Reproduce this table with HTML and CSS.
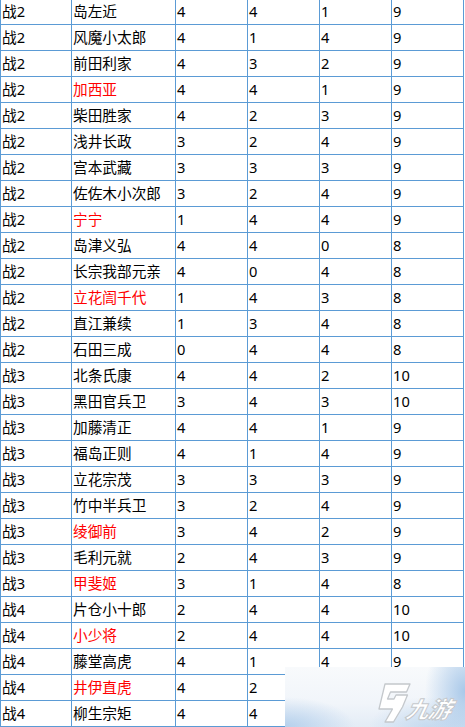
FILE: index.html
```html
<!DOCTYPE html>
<html lang="zh-CN">
<head>
<meta charset="utf-8">
<title>武将表</title>
<link rel="stylesheet" href="styles.css">
</head>
<body>
<div class="sheet">
  <div class="row"><div>战2</div><div>岛左近</div><div>4</div><div>4</div><div>1</div><div>9</div></div>
  <div class="row"><div>战2</div><div>风魔小太郎</div><div>4</div><div>1</div><div>4</div><div>9</div></div>
  <div class="row"><div>战2</div><div>前田利家</div><div>4</div><div>3</div><div>2</div><div>9</div></div>
  <div class="row"><div>战2</div><div class="red">加西亚</div><div>4</div><div>4</div><div>1</div><div>9</div></div>
  <div class="row"><div>战2</div><div>柴田胜家</div><div>4</div><div>2</div><div>3</div><div>9</div></div>
  <div class="row"><div>战2</div><div>浅井长政</div><div>3</div><div>2</div><div>4</div><div>9</div></div>
  <div class="row"><div>战2</div><div>宫本武藏</div><div>3</div><div>3</div><div>3</div><div>9</div></div>
  <div class="row"><div>战2</div><div>佐佐木小次郎</div><div>3</div><div>2</div><div>4</div><div>9</div></div>
  <div class="row"><div>战2</div><div class="red">宁宁</div><div>1</div><div>4</div><div>4</div><div>9</div></div>
  <div class="row"><div>战2</div><div>岛津义弘</div><div>4</div><div>4</div><div>0</div><div>8</div></div>
  <div class="row"><div>战2</div><div>长宗我部元亲</div><div>4</div><div>0</div><div>4</div><div>8</div></div>
  <div class="row"><div>战2</div><div class="red">立花訚千代</div><div>1</div><div>4</div><div>3</div><div>8</div></div>
  <div class="row"><div>战2</div><div>直江兼续</div><div>1</div><div>3</div><div>4</div><div>8</div></div>
  <div class="row"><div>战2</div><div>石田三成</div><div>0</div><div>4</div><div>4</div><div>8</div></div>
  <div class="row"><div>战3</div><div>北条氏康</div><div>4</div><div>4</div><div>2</div><div>10</div></div>
  <div class="row"><div>战3</div><div>黑田官兵卫</div><div>3</div><div>4</div><div>3</div><div>10</div></div>
  <div class="row"><div>战3</div><div>加藤清正</div><div>4</div><div>4</div><div>1</div><div>9</div></div>
  <div class="row"><div>战3</div><div>福岛正则</div><div>4</div><div>1</div><div>4</div><div>9</div></div>
  <div class="row"><div>战3</div><div>立花宗茂</div><div>3</div><div>3</div><div>3</div><div>9</div></div>
  <div class="row"><div>战3</div><div>竹中半兵卫</div><div>3</div><div>2</div><div>4</div><div>9</div></div>
  <div class="row"><div>战3</div><div class="red">绫御前</div><div>3</div><div>4</div><div>2</div><div>9</div></div>
  <div class="row"><div>战3</div><div>毛利元就</div><div>2</div><div>4</div><div>3</div><div>9</div></div>
  <div class="row"><div>战3</div><div class="red">甲斐姬</div><div>3</div><div>1</div><div>4</div><div>8</div></div>
  <div class="row"><div>战4</div><div>片仓小十郎</div><div>2</div><div>4</div><div>4</div><div>10</div></div>
  <div class="row"><div>战4</div><div class="red">小少将</div><div>2</div><div>4</div><div>4</div><div>10</div></div>
  <div class="row"><div>战4</div><div>藤堂高虎</div><div>4</div><div>1</div><div>4</div><div>9</div></div>
  <div class="row"><div>战4</div><div class="red">井伊直虎</div><div>4</div><div>2</div><div>4</div><div>10</div></div>
  <div class="row"><div>战4</div><div>柳生宗矩</div><div>4</div><div>4</div><div>4</div><div>10</div></div>
</div>

<div class="watermark">
  <svg class="wm-logo" viewBox="0 0 36 42" width="36" height="42" aria-hidden="true">
    <path d="M10 2 L35 2 L31.5 10 L15.5 10 L12.5 17 L19 17 L21 13 L32.5 13 L27.5 25 L18.5 40 L10 40 L17.5 27 L4 27 Z" fill="#ffffff" stroke="#c4c8cc" stroke-width="1.3" stroke-linejoin="round"/>
  </svg>
  <span class="wm-text">九游</span>
</div>
</body>
</html>
```

FILE: styles.css
```css
html, body {
  margin: 0;
  padding: 0;
  background: #ffffff;
}

body {
  width: 465px;
  height: 727px;
  overflow: hidden;
  position: relative;
}

.sheet {
  margin-top: -2px;
  width: 462px;
  display: grid;
  gap: 1px;
  padding: 1px;
  background: #5b9bd5;
  font-family: "Noto Sans", "Noto Sans CJK SC", sans-serif;
  font-size: 14.67px;
  color: #000000;
}

.row {
  display: grid;
  grid-template-columns: 70px 103px 71px 71px 71px 71px;
  gap: 1px;
}

.row > div {
  background: #ffffff;
  height: 25px;
  line-height: 25px;
  padding-left: 1px;
  white-space: nowrap;
  overflow: hidden;
}

.row > .red {
  color: #ff0000;
}

.watermark {
  position: absolute;
  left: 285px;
  top: 667px;
  width: 180px;
  height: 60px;
  display: flex;
  align-items: flex-end;
  padding-left: 90px;
  box-sizing: border-box;
  background:
    radial-gradient(ellipse 70px 30px at 0% 100%, rgba(176, 205, 235, 0.9), rgba(176, 205, 235, 0) 100%),
    radial-gradient(ellipse 40px 60px at 100% 40%, rgba(165, 198, 232, 0.95), rgba(165, 198, 232, 0) 100%),
    radial-gradient(ellipse 60px 30px at 80% 100%, rgba(190, 214, 238, 0.8), rgba(190, 214, 238, 0) 100%),
    linear-gradient(180deg, #f8fafc 0%, #f1f5fa 60%, #e3ecf6 100%);
}

.wm-logo {
  display: block;
  margin-bottom: 3px;
  flex: none;
}

.wm-text {
  font-family: "Noto Sans CJK SC", sans-serif;
  font-weight: 900;
  font-style: italic;
  font-size: 23px;
  line-height: 30px;
  color: #ffffff;
  -webkit-text-stroke: 1px #c4c8cc;
  margin-left: -4px;
  margin-bottom: 4px;
  transform: skewX(-12deg);
  letter-spacing: -1px;
}
```
